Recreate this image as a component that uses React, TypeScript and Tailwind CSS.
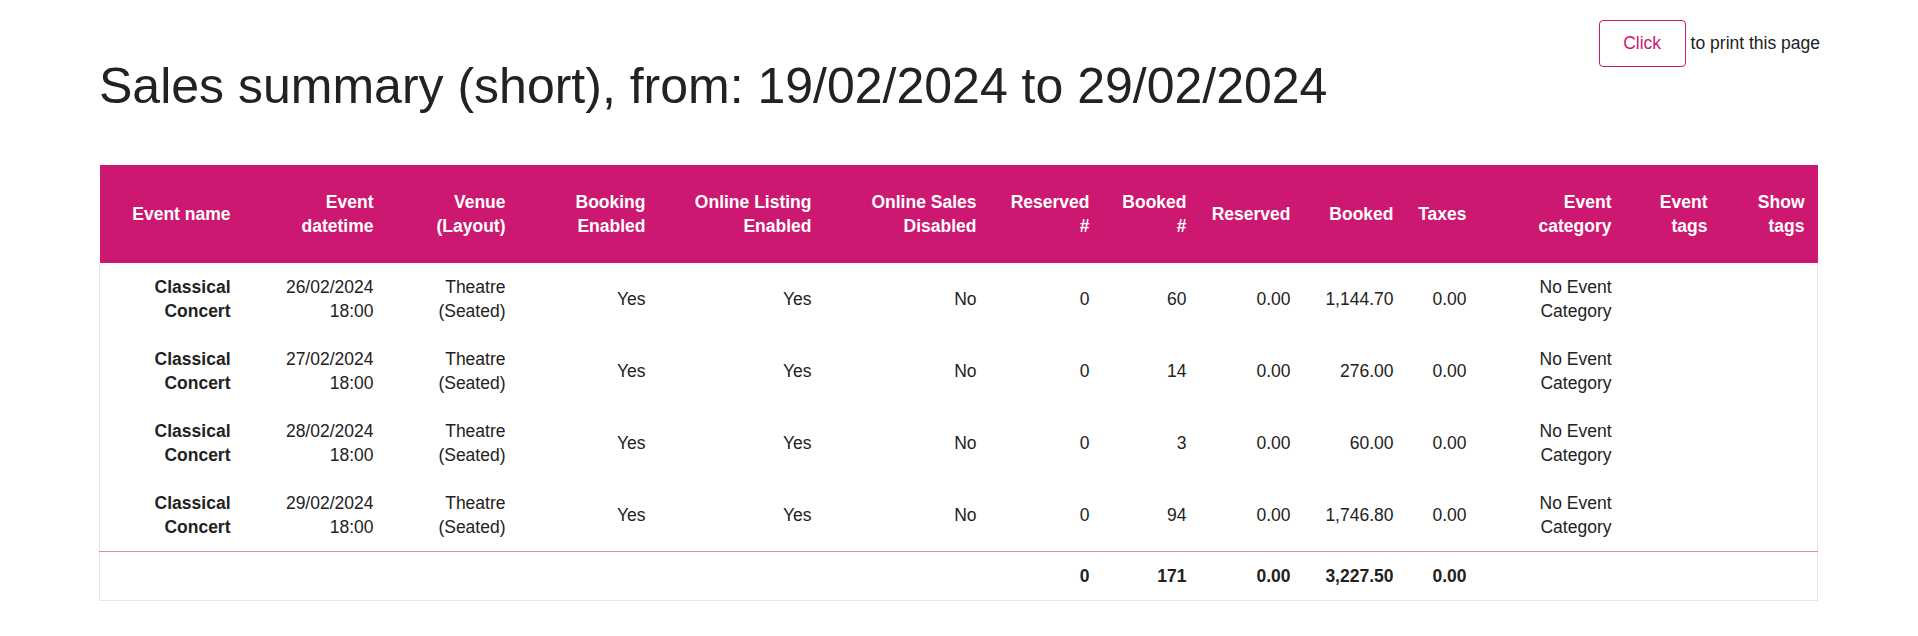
import React from "react";

const widths = [144, 143, 132, 140, 166, 165, 113, 97, 104, 103, 73, 145, 96, 97];
const headers: [string, string?][] = [
  ["Event name"], ["Event", "datetime"], ["Venue", "(Layout)"], ["Booking", "Enabled"],
  ["Online Listing", "Enabled"], ["Online Sales", "Disabled"], ["Reserved", "#"], ["Booked", "#"],
  ["Reserved"], ["Booked"], ["Taxes"], ["Event", "category"], ["Event", "tags"], ["Show", "tags"],
];
const rows = [
  ["26/02/2024", "60", "1,144.70"],
  ["27/02/2024", "14", "276.00"],
  ["28/02/2024", "3", "60.00"],
  ["29/02/2024", "94", "1,746.80"],
];

function Two({ a, b }: { a: string; b?: string }) {
  return b ? (<><div>{a}</div><div>{b}</div></>) : <div>{a}</div>;
}

export default function App() {
  return (
    <div className="bg-white text-[#222] pl-[99px] pr-[101px]" style={{ fontFamily: '"Liberation Sans", Arial, sans-serif' }}>
      <div className="float-right mt-[20px] flex items-center text-[17.5px]">
        <button className="w-[87px] h-[47px] border border-[#cc1870] rounded-[4px] text-[#cc1870] bg-white">Click</button>
        <span className="ml-[5px] mr-[-3px]">to print this page</span>
      </div>
      <h1 className="pt-[58px] text-[50px] leading-[57px] font-normal text-[#222]">
        Sales summary (short), from: 19/02/2024 to 29/02/2024
      </h1>
      <table className="mt-[50px] border-collapse table-fixed w-[1718px] text-[17.5px] leading-[24px]">
        <colgroup>
          {widths.map((w, i) => <col key={i} style={{ width: w }} />)}
        </colgroup>
        <thead>
          <tr className="bg-[#cc1870] text-white h-[98px]">
            {headers.map(([a, b], i) => (
              <th key={i} className="text-right font-bold pr-[13px] align-middle">
                <Two a={a} b={b} />
              </th>
            ))}
          </tr>
        </thead>
        <tbody className="border-x border-[#e6e6e6]">
          {rows.map((r, i) => (
            <tr key={i} className="h-[72px]">
              <td className="text-right pr-[13px] font-bold"><Two a="Classical" b="Concert" /></td>
              <td className="text-right pr-[13px]"><Two a={r[0]} b="18:00" /></td>
              <td className="text-right pr-[13px]"><Two a="Theatre" b="(Seated)" /></td>
              <td className="text-right pr-[13px]">Yes</td>
              <td className="text-right pr-[13px]">Yes</td>
              <td className="text-right pr-[13px]">No</td>
              <td className="text-right pr-[13px]">0</td>
              <td className="text-right pr-[13px]">{r[1]}</td>
              <td className="text-right pr-[13px]">0.00</td>
              <td className="text-right pr-[13px]">{r[2]}</td>
              <td className="text-right pr-[13px]">0.00</td>
              <td className="text-right pr-[13px]"><Two a="No Event" b="Category" /></td>
              <td></td>
              <td></td>
            </tr>
          ))}
          <tr className="h-[49px] border-t border-t-[#d990b4] border-b border-b-[#e6e6e6] font-bold">
            <td></td><td></td><td></td><td></td><td></td><td></td>
            <td className="text-right pr-[13px]">0</td>
            <td className="text-right pr-[13px]">171</td>
            <td className="text-right pr-[13px]">0.00</td>
            <td className="text-right pr-[13px]">3,227.50</td>
            <td className="text-right pr-[13px]">0.00</td>
            <td></td><td></td><td></td>
          </tr>
        </tbody>
      </table>
    </div>
  );
}
